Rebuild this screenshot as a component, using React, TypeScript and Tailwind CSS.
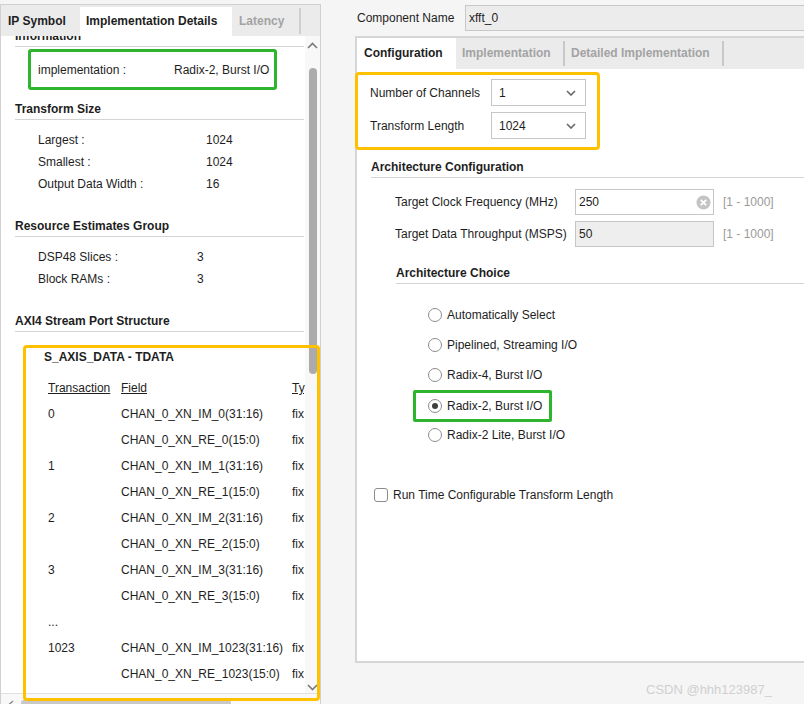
const FONT = "font-['Liberation_Sans',Arial,sans-serif]";

function Chevron({ up = false }: { up?: boolean }) {
  return (
    <svg width="11" height="7" viewBox="0 0 11 7" className={up ? "" : "rotate-180"}>
      <path d="M1 6 L5.5 1.5 L10 6" fill="none" stroke="#7a7a7a" strokeWidth="1.6" />
    </svg>
  );
}

function SelectBox({ value }: { value: string }) {
  return (
    <div className="w-[95px] h-[27px] bg-white border border-[#c6c6c6] flex items-center justify-between pl-[7px] pr-[9px]">
      <span>{value}</span>
      <svg width="10" height="6" viewBox="0 0 10 6">
        <path d="M1 1 L5 5 L9 1" fill="none" stroke="#666" strokeWidth="1.6" />
      </svg>
    </div>
  );
}

function Radio({ checked = false }: { checked?: boolean }) {
  return (
    <span className="w-[14px] h-[14px] rounded-full border border-[#8c8c8c] bg-white flex items-center justify-center shrink-0">
      {checked && <span className="w-[6px] h-[6px] rounded-full bg-[#404040]" />}
    </span>
  );
}

const kvTransform = [
  ["Largest :", "1024"],
  ["Smallest :", "1024"],
  ["Output Data Width :", "16"],
];

const kvResource = [
  ["DSP48 Slices :", "3"],
  ["Block RAMs :", "3"],
];

const tdataRows = [
  ["0", "CHAN_0_XN_IM_0(31:16)", "fix"],
  ["", "CHAN_0_XN_RE_0(15:0)", "fix"],
  ["1", "CHAN_0_XN_IM_1(31:16)", "fix"],
  ["", "CHAN_0_XN_RE_1(15:0)", "fix"],
  ["2", "CHAN_0_XN_IM_2(31:16)", "fix"],
  ["", "CHAN_0_XN_RE_2(15:0)", "fix"],
  ["3", "CHAN_0_XN_IM_3(31:16)", "fix"],
  ["", "CHAN_0_XN_RE_3(15:0)", "fix"],
  ["...", "", ""],
  ["1023", "CHAN_0_XN_IM_1023(31:16)", "fix"],
  ["", "CHAN_0_XN_RE_1023(15:0)", "fix"],
];

const choices = [
  "Automatically Select",
  "Pipelined, Streaming I/O",
  "Radix-4, Burst I/O",
  "Radix-2, Burst I/O",
  "Radix-2 Lite, Burst I/O",
];

function SectionHead({ title, className = "" }: { title: string; className?: string }) {
  return (
    <div className={`h-[21px] leading-[21px] font-bold border-b border-[#d4d4d4] ${className}`}>
      {title}
    </div>
  );
}

function LeftPanel() {
  return (
    <div className="w-[321px] shrink-0 pt-[4px] flex flex-col">
      <div className="border-t border-l border-r border-[#d0d0d0] flex flex-col">
        {/* tabs */}
        <div className="h-[31px] bg-[#ebebeb] flex items-end font-bold">
          <div className="w-[79px] h-[29px] leading-[29px] pl-[7px]">IP Symbol</div>
          <div className="w-[152px] h-[29px] leading-[29px] pl-[6px] bg-white">Implementation Details</div>
          <div className="w-[69px] self-start mt-[3px] h-[26px] leading-[27px] pl-[7px] text-[#a3a3a3] border-r-2 border-[#cfcfcf]">
            Latency
          </div>
        </div>
        {/* body */}
        <div className="h-[657px] flex">
          <div className="w-[304px] bg-white overflow-hidden">
            <div className="-mt-[10px] pl-[14px] pr-[1px]">
              <SectionHead title="Information" />
              <div className="mt-[2px] ml-[13px] w-[249px] h-[41px] border-[3px] border-[#2db52d] rounded-[3px] flex items-center pl-[7px]">
                <span className="w-[136px] shrink-0">implementation :</span>
                <span>Radix-2, Burst I/O</span>
              </div>
              <SectionHead title="Transform Size" className="mt-[9px]" />
              <div className="mt-[9px] pl-[23px]">
                {kvTransform.map(([k, v]) => (
                  <div key={k} className="h-[22px] flex items-center">
                    <span className="w-[168px] shrink-0">{k}</span>
                    <span>{v}</span>
                  </div>
                ))}
              </div>
              <SectionHead title="Resource Estimates Group" className="mt-[21px]" />
              <div className="mt-[9px] pl-[23px]">
                {kvResource.map(([k, v]) => (
                  <div key={k} className="h-[22px] flex items-center">
                    <span className="w-[159px] shrink-0">{k}</span>
                    <span>{v}</span>
                  </div>
                ))}
              </div>
              <SectionHead title="AXI4 Stream Port Structure" className="mt-[21px]" />
              <div className="mt-[15px] ml-[29px] h-[20px] leading-[20px] font-bold">S_AXIS_DATA - TDATA</div>
              <div className="mt-[8px] pl-[33px] whitespace-nowrap">
                <div className="h-[26px] flex items-center">
                  <span className="w-[73px] shrink-0 underline">Transaction</span>
                  <span className="w-[171px] shrink-0 underline">Field</span>
                  <span className="shrink-0 underline">Type</span>
                </div>
                {tdataRows.map(([t, f, ty], i) => (
                  <div key={i} className="h-[26px] flex items-center">
                    <span className="w-[73px] shrink-0">{t}</span>
                    <span className="w-[171px] shrink-0">{f}</span>
                    <span className="shrink-0">{ty}</span>
                  </div>
                ))}
              </div>
            </div>
          </div>
          {/* vertical scrollbar */}
          <div className="w-[15px] bg-[#f8f8f8] flex flex-col items-center">
            <div className="mt-[6px]">
              <Chevron up />
            </div>
            <div className="mt-[19px] w-[8px] h-[306px] rounded-[4px] bg-[#ababab]" />
            <div className="mt-auto mb-[2px]">
              <Chevron />
            </div>
          </div>
        </div>
        {/* horizontal scrollbar */}
        <div className="h-[14px] border-t border-[#e0e0e0] bg-[#f8f8f8] flex items-end">
          <svg width="7" height="10" viewBox="0 0 7 10" className="ml-[6px] mb-[-3px]">
            <path d="M6 1 L1.5 5 L6 9" fill="none" stroke="#8a8a8a" strokeWidth="1.4" />
          </svg>
          <div className="ml-[7px] w-[210px] h-[7px] rounded-t-[3px] bg-[#c8c8c8]" />
        </div>
      </div>
    </div>
  );
}

function RightPanel() {
  return (
    <div className="flex-1 pl-[34px] flex flex-col min-w-0">
      <div className="mt-[5px] h-[26px] flex items-center">
        <span className="ml-[2px] w-[108px]">Component Name</span>
        <div className="flex-1 h-[26px] bg-[#ececec] border border-[#c8c8c8] border-r-0 flex items-center pl-[3px]">
          xfft_0
        </div>
      </div>
      <div className="mt-[5px] h-[627px] border-2 border-r-0 border-[#d6d6d6] flex flex-col">
        {/* tabs */}
        <div className="h-[31px] bg-[#ebebeb] flex items-center font-bold shrink-0">
          <div className="w-[99px] h-full leading-[31px] pl-[7px] bg-white">Configuration</div>
          <div className="w-[109px] pl-[6px] text-[#a3a3a3] h-[25px] leading-[25px] border-r-2 border-[#c8c8c8]">
            Implementation
          </div>
          <div className="w-[159px] pl-[6px] text-[#a3a3a3] h-[25px] leading-[25px] border-r-2 border-[#c8c8c8]">
            Detailed Implementation
          </div>
        </div>
        {/* content */}
        <div className="flex-1 bg-white flex flex-col">
          <div className="mt-[3px] -ml-[2px] w-[245px] h-[78px] border-[3px] border-[#ffc000] rounded-[4px] pl-[12px] pt-[4px] flex flex-col gap-[6px]">
            <div className="flex items-center">
              <span className="w-[121px]">Number of Channels</span>
              <SelectBox value="1" />
            </div>
            <div className="flex items-center">
              <span className="w-[121px]">Transform Length</span>
              <SelectBox value="1024" />
            </div>
          </div>
          <SectionHead title="Architecture Configuration" className="mt-[7px] ml-[14px]" />
          <div className="mt-[11px] ml-[38px] flex flex-col gap-[6px]">
            <div className="flex items-center">
              <span className="w-[180px]">Target Clock Frequency (MHz)</span>
              <div className="w-[139px] h-[26px] border border-[#c6c6c6] bg-white flex items-center justify-between pl-[3px] pr-[2px]">
                <span>250</span>
                <svg width="15" height="15" viewBox="0 0 15 15">
                  <circle cx="7.5" cy="7.5" r="7" fill="#c4c4c4" />
                  <path d="M4.8 4.8 L10.2 10.2 M10.2 4.8 L4.8 10.2" stroke="#fff" strokeWidth="1.8" />
                </svg>
              </div>
              <span className="ml-[9px] text-[#9a9a9a]">[1 - 1000]</span>
            </div>
            <div className="flex items-center">
              <span className="w-[180px]">Target Data Throughput (MSPS)</span>
              <div className="w-[139px] h-[26px] border border-[#c6c6c6] bg-[#eeeeee] flex items-center pl-[3px]">
                <span>50</span>
              </div>
              <span className="ml-[9px] text-[#9a9a9a]">[1 - 1000]</span>
            </div>
          </div>
          <SectionHead title="Architecture Choice" className="mt-[16px] ml-[39px]" />
          <div className="mt-[16px] flex flex-col items-start">
            {choices.map((c, i) =>
              i === 3 ? (
                <div
                  key={c}
                  className="ml-[56px] w-[139px] h-[32px] -mb-[2px] border-[3px] border-[#2db52d] rounded-[2px] pl-[12px] flex items-center gap-[5px]"
                >
                  <Radio checked />
                  <span>{c}</span>
                </div>
              ) : (
                <div key={c} className="ml-[71px] h-[30px] flex items-center gap-[5px]">
                  <Radio />
                  <span>{c}</span>
                </div>
              )
            )}
          </div>
          <div className="mt-[35px] ml-[17px] h-[20px] flex items-center gap-[5px]">
            <span className="w-[14px] h-[14px] rounded-[3px] border border-[#8c8c8c] bg-white" />
            <span>Run Time Configurable Transform Length</span>
          </div>
        </div>
      </div>
    </div>
  );
}

export default function App() {
  return (
    <div className={`${FONT} text-[12px] text-[#1e1e1e] w-[804px] h-[704px] bg-[#f5f5f5] relative overflow-hidden flex`}>
      <LeftPanel />
      <RightPanel />
      {/* annotation overlay on the left panel */}
      <div className="absolute left-[23px] top-[345px] w-[297px] h-[356px] border-[3px] border-[#ffc000] rounded-[4px] pointer-events-none" />
      <div className="absolute left-[646px] top-[680px] text-[13px] text-[#d0d0d0]">CSDN @hhh123987_</div>
    </div>
  );
}
